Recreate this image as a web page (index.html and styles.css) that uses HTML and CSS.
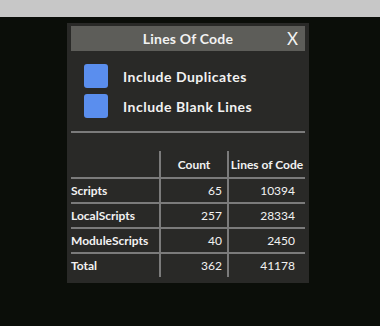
FILE: index.html
```html
<!DOCTYPE html>
<html lang="en">
<head>
  <meta charset="UTF-8" />
  <title>Lines Of Code</title>
  <link rel="stylesheet" href="styles.css">
</head>
<body>
  <div class="top-bar"></div>

  <div class="panel">
    <div class="title-bar">
      <span></span>
      <span class="title">Lines Of Code</span>
      <span class="close">X</span>
    </div>

    <div class="options">
      <label class="option"><span class="check"></span>Include Duplicates</label>
      <label class="option"><span class="check"></span>Include Blank Lines</label>
    </div>

    <div class="divider"></div>

    <table class="stats">
      <thead>
        <tr>
          <th></th>
          <th>Count</th>
          <th>Lines of Code</th>
        </tr>
      </thead>
      <tbody>
        <tr><td>Scripts</td><td class="num">65</td><td class="num loc">10394</td></tr>
        <tr><td>LocalScripts</td><td class="num">257</td><td class="num loc">28334</td></tr>
        <tr><td>ModuleScripts</td><td class="num">40</td><td class="num loc">2450</td></tr>
        <tr><td>Total</td><td class="num">362</td><td class="num loc">41178</td></tr>
      </tbody>
    </table>
  </div>
</body>
</html>
```

FILE: styles.css
```css
body {
  margin: 0;
  height: 326px;
  overflow: hidden;
  background-color: #0b0e09;
  font-family: Lato, "Liberation Sans", sans-serif;
  color: #f2f2f2;
}

.top-bar {
  height: 17px;
  background-color: #c7c7c7;
}

.panel {
  box-sizing: border-box;
  width: 242px;
  height: 260px;
  margin: 6px 0 0 67px;
  padding: 3px 4px;
  background-color: #292927;
}

.title-bar {
  height: 25px;
  display: grid;
  grid-template-columns: 1fr auto 1fr;
  align-items: center;
  background-color: #5d5d59;
}

.title {
  font-size: 14px;
  font-weight: 700;
  letter-spacing: 0.2px;
}

.close {
  justify-self: end;
  padding-right: 7px;
  font-size: 17px;
  font-weight: 400;
}

.options {
  display: flex;
  flex-direction: column;
  gap: 6px;
  padding: 13px 13px;
}

.option {
  display: flex;
  align-items: center;
  gap: 15px;
  font-size: 14px;
  font-weight: 700;
  letter-spacing: 0.5px;
}

.check {
  width: 24px;
  height: 24px;
  border-radius: 3px;
  background-color: #5a8eee;
}

.divider {
  height: 2px;
  background-color: #7b7b7b;
}

.stats {
  width: 234px;
  margin-top: 18px;
  border-collapse: separate;
  border-spacing: 0;
  table-layout: fixed;
  font-size: 12px;
}

.stats th, .stats td {
  padding: 0;
}

.stats th {
  height: 26px;
  font-weight: 700;
  text-align: center;
}

.stats th:nth-child(1) { width: 88px; }
.stats th:nth-child(2) { width: 66px; }

.stats td {
  height: 23px;
  border-top: 2px solid #7b7b7b;
  font-weight: 700;
}

.stats th + th, .stats td + td {
  border-left: 2px solid #7b7b7b;
}

.stats td.num {
  font-weight: 400;
  text-align: right;
  padding-right: 5px;
}

.stats td.loc {
  padding-right: 10px;
}
```
